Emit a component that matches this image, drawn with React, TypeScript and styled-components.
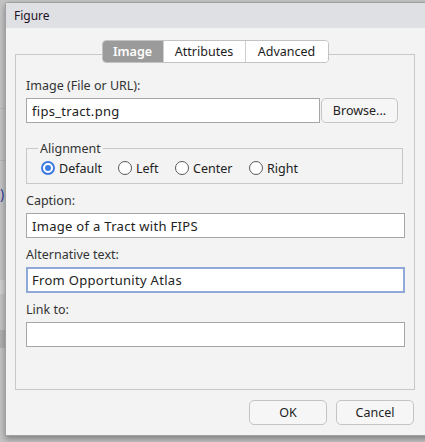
import styled, { createGlobalStyle } from "styled-components";

const GlobalStyle = createGlobalStyle`
  html, body {
    margin: 0;
    padding: 0;
    background: #c4c4c4;
    font-family: "Noto Sans", "Open Sans", sans-serif;
  }
  * {
    box-sizing: border-box;
  }
`;

const Backdrop = styled.div`
  position: relative;
  width: 425px;
  height: 442px;
  overflow: hidden;
  padding: 2px 0 0 5px;
  background:
    linear-gradient(#b4b4b4, #b4b4b4) 0 108px / 5px 1px no-repeat,
    linear-gradient(#b4b4b4, #b4b4b4) 0 160px / 5px 1px no-repeat,
    linear-gradient(#d0d0d0, #d0d0d0) 0 280px / 5px 14px no-repeat,
    linear-gradient(#b0b0b0, #b0b0b0) 0 330px / 5px 18px no-repeat,
    #c4c4c4;
`;

const Paren = styled.span`
  position: absolute;
  left: 0;
  top: 184px;
  font-size: 14px;
  color: #2a3a9a;
`;

const Dialog = styled.div`
  width: 425px;
  height: 434px;
  background: #f2f3f2;
  border: 1px solid #a0a0a0;
  border-right: none;
  border-radius: 3px 0 0 0;
  box-shadow: 0 3px 6px rgba(0, 0, 0, 0.35);
  display: flex;
  flex-direction: column;
`;

const TitleBar = styled.div`
  height: 25px;
  background: #dfe0e4;
  padding-left: 8px;
  display: flex;
  align-items: center;
  font-size: 12px;
  color: #1e1226;
`;

const Body = styled.div`
  flex: 1;
  display: flex;
  flex-direction: column;
  padding: 12px 15px 0 9px;
`;

const Tabs = styled.div`
  position: relative;
  z-index: 1;
  align-self: center;
  display: flex;
  height: 23px;
  border: 1px solid #c2c2c2;
  border-radius: 4px;
  background: #ffffff;
  overflow: hidden;
`;

const Tab = styled.div<{ $active?: boolean; $w: number }>`
  width: ${(p) => p.$w}px;
  display: flex;
  align-items: center;
  justify-content: center;
  font-size: 12.5px;
  color: ${(p) => (p.$active ? "#ffffff" : "#1c1c1c")};
  background: ${(p) => (p.$active ? "#9b9b9b" : "#ffffff")};
  font-weight: ${(p) => (p.$active ? 600 : 400)};
  border-left: ${(p) => (p.$active ? "none" : "1px solid #cfcfcf")};
  &:first-child {
    border-left: none;
  }
`;

const Panel = styled.div`
  margin-top: -9px;
  height: 336px;
  border: 1px solid #c8c8c8;
  padding: 23px 9px 0 10px;
  display: flex;
  flex-direction: column;
`;

const Label = styled.div<{ $top?: number }>`
  font-size: 12.5px;
  line-height: 16px;
  color: #333333;
  margin-top: ${(p) => p.$top ?? 0}px;
  margin-bottom: 4px;
`;

const Row = styled.div`
  display: flex;
  align-items: center;
  gap: 1px;
`;

const Input = styled.div<{ $focus?: boolean; $w?: number }>`
  width: ${(p) => (p.$w ? `${p.$w}px` : "100%")};
  height: ${(p) => (p.$focus ? 26 : 25)}px;
  flex-shrink: 0;
  background: #ffffff;
  border: ${(p) => (p.$focus ? "2px solid #90a8d8" : "1px solid #a6a6a6")};
  padding-left: ${(p) => (p.$focus ? 4 : 5)}px;
  display: flex;
  align-items: center;
  font-size: 13px;
  letter-spacing: 0.3px;
  color: #222222;
`;

const Button = styled.div<{ $w: number }>`
  width: ${(p) => p.$w}px;
  height: 25px;
  border: 1px solid #c4c4c4;
  border-radius: 5px;
  background: #f6f6f6;
  display: flex;
  align-items: center;
  justify-content: center;
  font-size: 12.5px;
  color: #222222;
`;

const Group = styled.fieldset`
  margin: 17px 2px 0 0;
  padding: 1px 0 5px 14px;
  border: 1px solid #c8c8c8;
  min-width: 0;
`;

const Legend = styled.legend`
  padding: 0 2px;
  margin-left: -3px;
  font-size: 12.5px;
  line-height: 17px;
  color: #333333;
`;

const RadioRow = styled.div`
  display: flex;
  align-items: center;
  height: 20px;
`;

const RadioItem = styled.label<{ $w: number }>`
  width: ${(p) => p.$w}px;
  display: flex;
  align-items: center;
  gap: 4px;
  font-size: 12.5px;
  color: #222222;
`;

const Dot = styled.span<{ $on?: boolean }>`
  width: 14px;
  height: 14px;
  border-radius: 50%;
  background: #ffffff;
  border: ${(p) => (p.$on ? "2px solid #3d7be0" : "1px solid #5a5a5a")};
  display: flex;
  align-items: center;
  justify-content: center;
  &::after {
    content: "";
    width: 6px;
    height: 6px;
    border-radius: 50%;
    background: ${(p) => (p.$on ? "#3d7be0" : "transparent")};
  }
`;

const Footer = styled.div`
  display: flex;
  justify-content: flex-end;
  gap: 9px;
  padding: 10px 1px 0 0;
`;

const radios = [
  { label: "Default", w: 77, on: true },
  { label: "Left", w: 57 },
  { label: "Center", w: 74 },
  { label: "Right", w: 60 },
];

export default function App() {
  return (
    <>
      <GlobalStyle />
      <Backdrop>
        <Paren>)</Paren>
        <Dialog>
          <TitleBar>Figure</TitleBar>
          <Body>
            <Tabs>
              <Tab $active $w={60}>Image</Tab>
              <Tab $w={82}>Attributes</Tab>
              <Tab $w={83}>Advanced</Tab>
            </Tabs>
            <Panel>
              <Label>Image (File or URL):</Label>
              <Row>
                <Input $w={294}>fips_tract.png</Input>
                <Button $w={77}>Browse...</Button>
              </Row>
              <Group>
                <Legend>Alignment</Legend>
                <RadioRow>
                  {radios.map((r) => (
                    <RadioItem key={r.label} $w={r.w}>
                      <Dot $on={r.on} />
                      {r.label}
                    </RadioItem>
                  ))}
                </RadioRow>
              </Group>
              <Label $top={9}>Caption:</Label>
              <Input>Image of a Tract with FIPS</Input>
              <Label $top={9}>Alternative text:</Label>
              <Input $focus>From Opportunity Atlas</Input>
              <Label $top={9}>Link to:</Label>
              <Input />
            </Panel>
            <Footer>
              <Button $w={78}>OK</Button>
              <Button $w={78}>Cancel</Button>
            </Footer>
          </Body>
        </Dialog>
      </Backdrop>
    </>
  );
}
